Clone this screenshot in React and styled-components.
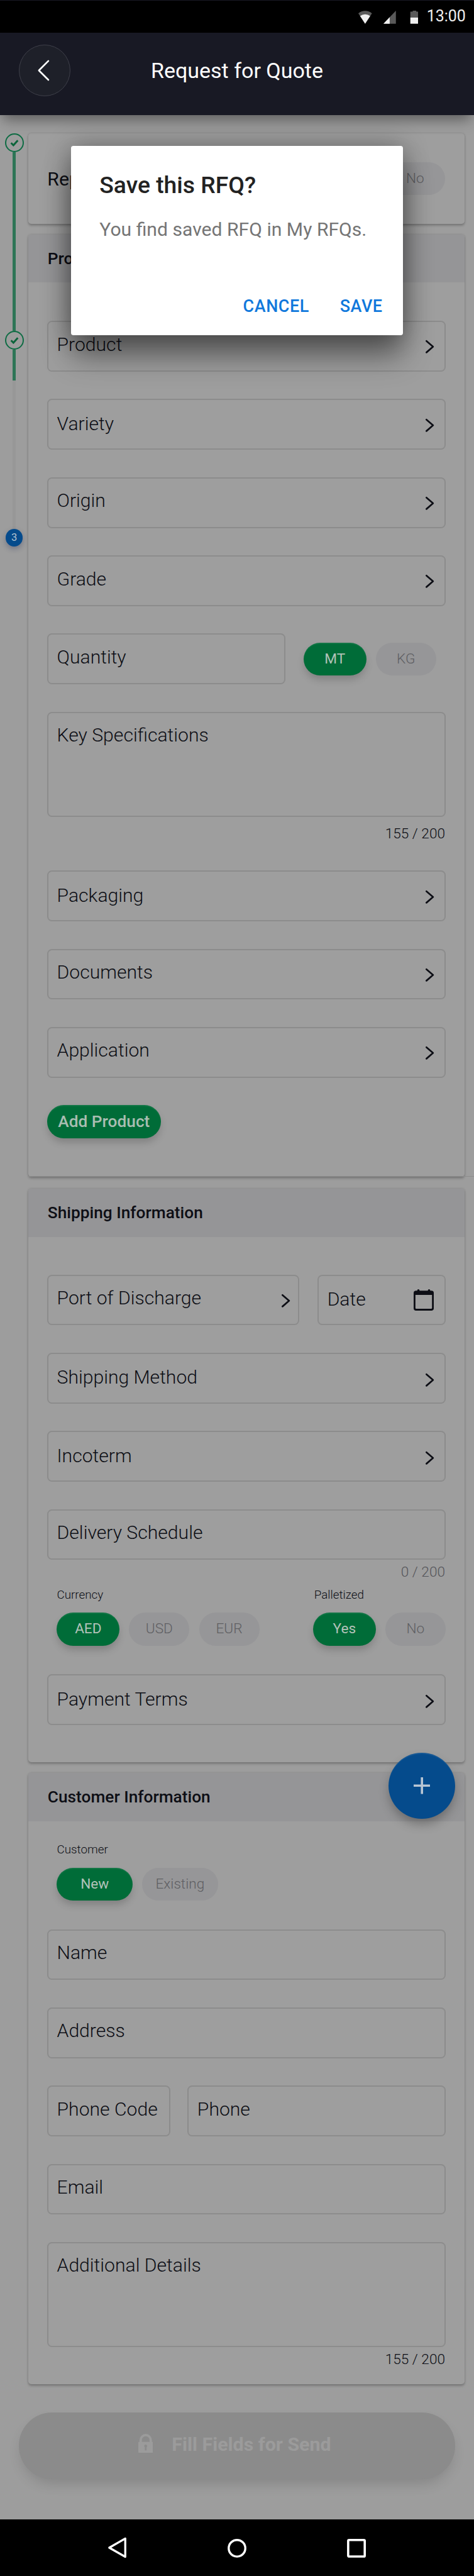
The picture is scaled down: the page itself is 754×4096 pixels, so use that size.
import React from "react";
import styled, { createGlobalStyle } from "styled-components";

/* 1rem = 10 design pixels */
const GlobalStyle = createGlobalStyle`
  * { box-sizing: border-box; }
  html { font-size: 9.421px; }
  body {
    margin: 0;
    background: #9d9d9d;
    color: #0d0e15;
    font-family: Roboto, "Liberation Sans", sans-serif;
    font-weight: 300;
  }
`;

const Screen = styled.div`
  position: relative;
  width: 754px;
  height: 4096px;
  overflow: hidden;
  display: flex;
  flex-direction: column;
`;

const StatusBar = styled.div`
  flex: none;
  height: 5.5rem;
  border-top: 1px solid #181924;
  background: #000;
  display: flex;
  align-items: center;
  justify-content: flex-end;
  padding: 0 1.4rem 0 0;
  color: #f0f0f0;

  svg { display: block; height: 2.2rem; width: auto; }
`;

const StatusIcons = styled.div`
  display: flex;
  gap: 1.9rem;
  margin: 0.2rem 1.4rem 0 0;
`;

const Clock = styled.span`
  font-size: 2.65rem;
  font-weight: 400;
  line-height: 1;
`;

const AppBar = styled.header`
  position: relative;
  z-index: 1;
  flex: none;
  height: 13.9rem;
  padding: 0.2rem 3.2rem 1.3rem;
  display: grid;
  grid-template-columns: 8.7rem 1fr 8.7rem;
  align-items: center;
  background: #181924;
  box-shadow: 0 1.1rem 2.2rem -0.4rem rgba(0, 0, 0, 0.42);
`;

const BackButton = styled.button`
  width: 8.7rem;
  height: 8.7rem;
  padding: 0;
  border-radius: 50%;
  border: 1px solid #3f404a;
  background: #1e2029;
  display: flex;
  align-items: center;
  justify-content: center;

  svg { width: 2rem; height: 3.6rem; margin-right: 0.3rem; }
`;

const Title = styled.h1`
  margin: 0;
  text-align: center;
  color: #fff;
  font-size: 3.61rem;
  font-weight: 400;
  line-height: 1;
`;

const Body = styled.main`
  flex: none;
  height: 405.8rem;
  display: grid;
  grid-template-columns: 4.8rem 73.6rem;
  padding-top: 3.1rem;
`;

const Stepper = styled.div`
  display: flex;
  flex-direction: column;
  align-items: center;
`;

const StepDone = styled.div`
  width: 3.2rem;
  height: 3.2rem;
  border-radius: 50%;
  border: 2px solid #0f6c44;
  display: flex;
  align-items: center;
  justify-content: center;

  svg { width: 1.5rem; height: 1.3rem; }
`;

const StepCurrent = styled.div`
  width: 2.9rem;
  height: 2.9rem;
  border-radius: 50%;
  background: #054b8c;
  color: #b4c2d0;
  font-size: 1.75rem;
  font-weight: 400;
  line-height: 3rem;
  text-align: center;
  box-shadow: 0 0.4rem 0.9rem rgba(20, 30, 80, 0.3);
`;

const StepLine = styled.div`
  width: 0.45rem;
  height: ${(p) => p.$length}rem;
  background: ${(p) => (p.$done ? "#2d7556" : "#979797")};
`;

const Card = styled.section`
  height: ${(p) => p.$height}rem;
  margin-bottom: ${(p) => p.$after}rem;
  border-radius: 0.5rem;
  background: #9e9e9e;
  box-shadow: 0 0.3rem 0.4rem rgba(0, 0, 0, 0.2), 0 0 0.4rem rgba(0, 0, 0, 0.13);
`;

const CardHeader = styled.h2`
  margin: 0;
  height: 8.1rem;
  padding-left: 3.25rem;
  border-radius: 0.5rem 0.5rem 0 0;
  background: #959597;
  font-size: 2.79rem;
  font-weight: 500;
  line-height: 8.1rem;
`;

const Fields = styled.div`
  padding: ${(p) => p.$top}rem 3.15rem 0;
  display: flex;
  flex-direction: column;
`;

const Row = styled.div`
  display: flex;
  justify-content: space-between;
  margin-bottom: 4.63rem;
`;

const Box = styled.div`
  width: ${(p) => p.$width || 67.3}rem;
  height: ${(p) => p.$height || 8.57}rem;
  padding: 0 ${(p) => p.$inset || 1.55}rem 0 1.45rem;
  border: 2px solid #8c8c8c;
  border-radius: 0.8rem;
  display: flex;
  justify-content: space-between;
  align-items: flex-start;
`;

const Label = styled.span`
  margin-top: ${(p) => (p.$low ? 1.95 : 1.75)}rem;
  font-size: 3.2rem;
  line-height: 4rem;
  white-space: nowrap;
`;

const ChevronSlot = styled.span`
  margin-top: ${(p) => (p.$low ? 3.2 : 3)}rem;
  height: 2.4rem;

  svg { display: block; width: 1.7rem; height: 2.4rem; }
`;

const CalendarSlot = styled.span`
  margin-top: 2.3rem;
  height: 3.6rem;

  svg { display: block; width: 3.4rem; height: 3.6rem; }
`;

const Counter = styled.div`
  height: ${(p) => p.$height}rem;
  margin-top: ${(p) => p.$offset}rem;
  padding-right: 0.1rem;
  text-align: right;
  font-size: 2.4rem;
  line-height: 3rem;
  color: ${(p) => (p.$muted ? "#55555a" : "#0d0e15")};
`;

const Stack = styled.div`
  display: flex;
  flex-direction: column;
`;

const ChipGroup = styled.div`
  display: flex;
  gap: 1.6rem;
`;

const Chip = styled.span`
  width: ${(p) => p.$width || (p.$on ? 10.6 : 10.2)}rem;
  height: 5.6rem;
  border-radius: 2.8rem;
  background: ${(p) => (p.$on ? "#006c38" : "#969698")};
  color: ${(p) => (p.$on ? "#b2c2b9" : "#5f5f63")};
  font-size: 2.4rem;
  font-weight: ${(p) => (p.$on ? 400 : 300)};
  line-height: 5.6rem;
  text-align: center;
  box-shadow: ${(p) =>
    p.$on
      ? "0 0.8rem 1.4rem -0.2rem rgba(0, 0, 0, 0.2), inset 0 0.2rem 0.1rem rgba(255, 255, 255, 0.07)"
      : "none"};
`;

const GroupLabel = styled.div`
  height: 4.2rem;
  padding-left: ${(p) => p.$indent || 0}rem;
  font-size: 2rem;
  line-height: 2.4rem;
`;

const AddButton = styled.button`
  width: 19.2rem;
  height: 5.6rem;
  padding: 0 0 0.2rem;
  border: 0;
  border-radius: 2.8rem;
  background: #006c38;
  color: #a9bdb1;
  font-family: inherit;
  font-size: 2.79rem;
  font-weight: 500;
  line-height: 1;
  white-space: nowrap;
  box-shadow: 0 0.8rem 1.4rem -0.2rem rgba(0, 0, 0, 0.2), inset 0 0.2rem 0.1rem rgba(255, 255, 255, 0.07);
`;

const CardRule = styled.div`
  width: 75.2rem;
  height: 1px;
  margin: -2.15rem 0 calc(2.15rem - 1px);
  background: #8c8c8c;
`;

const SendButton = styled.button`
  width: 73.6rem;
  height: 11.2rem;
  margin-left: -1.6rem;
  padding: 0 0.8rem 0.5rem 0;
  border: 0;
  border-radius: 5.6rem;
  background: #8b8b8b;
  color: #9b9b9b;
  font-family: inherit;
  font-size: 3.22rem;
  font-weight: 700;
  display: flex;
  align-items: center;
  justify-content: center;
  gap: 3.2rem;
  box-shadow: 0 1.2rem 2.4rem -0.6rem rgba(0, 0, 0, 0.16);

  svg { width: 2.5rem; height: 3.2rem; margin-top: -0.4rem; }
`;

const NavBar = styled.nav`
  flex: none;
  height: 9.8rem;
  padding-bottom: 0.2rem;
  background: #000;
  display: flex;
  justify-content: center;
  align-items: center;
  gap: 16.8rem;

  svg { width: 3.4rem; height: 3.6rem; }
`;

const Fab = styled.button`
  position: absolute;
  left: 65.6rem;
  top: 295.8rem;
  width: 11.2rem;
  height: 11.2rem;
  padding: 0;
  border: 0;
  border-radius: 50%;
  background: #054b8c;
  display: flex;
  align-items: center;
  justify-content: center;
  box-shadow: 0 1rem 1.8rem -0.2rem rgba(0, 0, 0, 0.3), inset 0 0.2rem 0.1rem rgba(255, 255, 255, 0.08);

  svg { width: 2.8rem; height: 2.8rem; }
`;

const Dialog = styled.div`
  position: absolute;
  z-index: 2;
  left: 12rem;
  top: 24.6rem;
  width: 56rem;
  height: 32rem;
  padding: 4.1rem 2.6rem 0 4.8rem;
  border-radius: 0.4rem;
  background: #fff;
  box-shadow: 0 3.6rem 5rem -0.2rem rgba(0, 0, 0, 0.42), 0 0 4.4rem rgba(0, 0, 0, 0.32);
`;

const DialogTitle = styled.h3`
  margin: 0;
  color: #222;
  font-size: 3.96rem;
  font-weight: 500;
  line-height: 5.1rem;
`;

const DialogText = styled.p`
  margin: 2.4rem 0 0;
  color: #757575;
  font-size: 3.2rem;
  font-weight: 400;
  line-height: 5rem;
  white-space: nowrap;
`;

const DialogActions = styled.div`
  margin-top: 8.6rem;
  display: flex;
  justify-content: flex-end;
  gap: 5.2rem;
  padding-right: 0.8rem;
`;

const TextButton = styled.span`
  color: #1078dc;
  font-size: 2.86rem;
  font-weight: 500;
  line-height: 4rem;
  letter-spacing: 0.02em;
`;

const Check = () => (
  <svg viewBox="0 0 16 14">
    <path d="M1.800 7.200 6 11.400 14 2.500" fill="none" stroke="#0b643a" strokeWidth="3.400" />
  </svg>
);

const Chevron = ({ low }) => (
  <ChevronSlot $low={low}>
    <svg viewBox="0 0 17 24">
      <path d="M2.500 2.400 13.600 12 2.500 21.600" fill="none" stroke="#0d0e15" strokeWidth="2.900" strokeLinecap="round" strokeLinejoin="round" />
    </svg>
  </ChevronSlot>
);

const Calendar = () => (
  <CalendarSlot>
    <svg viewBox="0 0 34 36">
      <path d="M4 2.500h2V2a2 2 0 0 1 4 0v.5h14V2a2 2 0 0 1 4 0v.5h2a4 4 0 0 1 4 4V32a4 4 0 0 1-4 4H4a4 4 0 0 1-4-4V6.500a4 4 0 0 1 4-4ZM3 9.500V31.500a1.500 1.500 0 0 0 1.500 1.500h25a1.500 1.500 0 0 0 1.500-1.500V9.500Z" fill="#0d0e15" fillRule="evenodd" />
    </svg>
  </CalendarSlot>
);

const Field = ({ label, width, height, inset, chevron, low, lowChevron, children }) => (
  <Box $width={width} $height={height} $inset={inset}>
    <Label $low={low}>{label}</Label>
    {chevron && <Chevron low={lowChevron} />}
    {children}
  </Box>
);

const FieldRow = (props) => (
  <Row>
    <Field {...props} />
  </Row>
);

const RepeatRow = styled.div`
  height: 100%;
  padding: 0 3.2rem 0 3.2rem;
  display: flex;
  align-items: center;
  justify-content: space-between;
  font-size: 3.2rem;
  font-weight: 400;
`;

const QuantityChips = styled(ChipGroup)`
  padding: 1.5rem 1.6rem 0 0;
`;

const ChoiceRow = styled.div`
  display: flex;
  justify-content: space-between;
  padding: 0 0 0 1.65rem;
  margin-bottom: 4.8rem;
`;

export default function App() {
  return (
    <>
      <GlobalStyle />
      <Screen>
        <StatusBar>
          <StatusIcons>
            <svg viewBox="0 0 23 22">
              <path d="M0 4.500A18 18 0 0 1 23 4.500L11.500 22Z" fill="#5a5a5a" />
              <path d="M3 9A14 14 0 0 1 20 9L11.500 22Z" fill="#f0f0f0" />
            </svg>
            <svg viewBox="0 0 21 22">
              <path d="M21 0V22H0Z" fill="#5a5a5a" />
              <path d="M10.500 11V22H0Z" fill="#f0f0f0" />
            </svg>
            <svg viewBox="-5 0 19 22">
              <path d="M4 0h6v1.500h4v10H0v-10h4Z" fill="#5a5a5a" />
              <path d="M0 11.500h14V22H0Z" fill="#f0f0f0" />
            </svg>
          </StatusIcons>
          <Clock>13:00</Clock>
        </StatusBar>
        <AppBar>
          <BackButton aria-label="Back">
            <svg viewBox="0 0 20 36">
              <path d="M18 2 2 18 18 34" fill="none" stroke="#fff" strokeWidth="2.800" strokeLinecap="round" strokeLinejoin="round" />
            </svg>
          </BackButton>
          <Title>Request for Quote</Title>
        </AppBar>
        <Body>
          <Stepper>
            <StepDone><Check /></StepDone>
            <StepLine $done $length={30.1} />
            <StepDone><Check /></StepDone>
            <StepLine $done $length={5.2} />
            <StepLine $length={25.1} />
            <StepCurrent>3</StepCurrent>
          </Stepper>
          <div>
            <Card $height={15.3} $after={1.8}>
              <RepeatRow>
                Repeat
                <ChipGroup>
                  <Chip $on>Yes</Chip>
                  <Chip>No</Chip>
                </ChipGroup>
              </RepeatRow>
            </Card>
            <Card $height={158.97} $after={2.1}>
              <CardHeader>Product Information</CardHeader>
              <Fields $top={6.45}>
                <FieldRow label="Product" chevron />
                <FieldRow label="Variety" chevron low />
                <FieldRow label="Origin" chevron />
                <FieldRow label="Grade" chevron />
                <Row>
                  <Field label="Quantity" width={40.2} />
                  <QuantityChips>
                    <Chip $on>MT</Chip>
                    <Chip>KG</Chip>
                  </QuantityChips>
                </Row>
                <Field label="Key Specifications" height={17.77} />
                <Counter $offset={1.4} $height={7.63}>155 / 200</Counter>
                <FieldRow label="Packaging" chevron low />
                <FieldRow label="Documents" chevron />
                <FieldRow label="Application" chevron />
                <AddButton>Add Product</AddButton>
              </Fields>
            </Card>
            <CardRule />
            <Card $height={96.75} $after={1.85}>
              <CardHeader>Shipping Information</CardHeader>
              <Fields $top={6.35}>
                <Row>
                  <Field label="Port of Discharge" width={42.6} inset={1.2} chevron />
                  <Field label="Date" width={21.65} inset={1.8} low>
                    <Calendar />
                  </Field>
                </Row>
                <FieldRow label="Shipping Method" chevron low lowChevron />
                <FieldRow label="Incoterm" chevron low lowChevron />
                <Field label="Delivery Schedule" />
                <Counter $offset={0.6} $height={4.1} $muted>0 / 200</Counter>
                <ChoiceRow>
                  <Stack>
                    <GroupLabel>Currency</GroupLabel>
                    <ChipGroup>
                      <Chip $on>AED</Chip>
                      <Chip>USD</Chip>
                      <Chip>EUR</Chip>
                    </ChipGroup>
                  </Stack>
                  <Stack>
                    <GroupLabel $indent={0.2}>Palletized</GroupLabel>
                    <ChipGroup>
                      <Chip $on>Yes</Chip>
                      <Chip>No</Chip>
                    </ChipGroup>
                  </Stack>
                </ChoiceRow>
                <FieldRow label="Payment Terms" chevron low lowChevron />
              </Fields>
            </Card>
            <Card $height={103.15} $after={4.8}>
              <CardHeader>Customer Information</CardHeader>
              <Fields $top={3.65}>
                <ChoiceRow>
                  <Stack>
                    <GroupLabel>Customer</GroupLabel>
                    <ChipGroup>
                      <Chip $on $width={12.8}>New</Chip>
                      <Chip $width={12.8}>Existing</Chip>
                    </ChipGroup>
                  </Stack>
                </ChoiceRow>
                <FieldRow label="Name" />
                <FieldRow label="Address" />
                <Row>
                  <Field label="Phone Code" width={20.8} inset={0.1} />
                  <Field label="Phone" width={43.6} />
                </Row>
                <FieldRow label="Email" />
                <Field label="Additional Details" height={17.77} />
                <Counter $offset={0.6} $height={3}>155 / 200</Counter>
              </Fields>
            </Card>
            <SendButton>
              <svg viewBox="0 0 25 32">
                <path d="M2 13.500V10.500a10.500 10.500 0 0 1 21 0v3h.5a1.500 1.500 0 0 1 1.500 1.500v15.500a1.500 1.500 0 0 1-1.500 1.500h-22a1.500 1.500 0 0 1-1.500-1.500V15a1.500 1.500 0 0 1 1.500-1.500ZM6 13.500h13V10.500a6.500 6.500 0 0 0-13 0ZM10 20.500a2.500 2.500 0 0 0 1 2V28h3v-5.500a2.500 2.500 0 1 0-4-2Z" fill="#9b9b9b" fillRule="evenodd" />
              </svg>
              Fill Fields for Send
            </SendButton>
          </div>
        </Body>
        <NavBar>
          <svg viewBox="0 0 34 36">
            <path d="M30 2.500V33.500L3 18Z" fill="none" stroke="#fff" strokeWidth="3.500" strokeLinejoin="round" />
          </svg>
          <svg viewBox="0 0 34 36">
            <circle cx="17" cy="19" r="14" fill="none" stroke="#fff" strokeWidth="3.600" />
          </svg>
          <svg viewBox="0 0 34 36">
            <rect x="3" y="5" width="28" height="28" rx="1.500" fill="none" stroke="#fff" strokeWidth="3.800" />
          </svg>
        </NavBar>
        <Fab aria-label="Add">
          <svg viewBox="0 0 28 28">
            <path d="M14 0V28M0 14H28" stroke="#b9c6d4" strokeWidth="3.800" />
          </svg>
        </Fab>
        <Dialog role="dialog">
          <DialogTitle>Save this RFQ?</DialogTitle>
          <DialogText>You find saved RFQ in My RFQs.</DialogText>
          <DialogActions>
            <TextButton>CANCEL</TextButton>
            <TextButton>SAVE</TextButton>
          </DialogActions>
        </Dialog>
      </Screen>
    </>
  );
}
